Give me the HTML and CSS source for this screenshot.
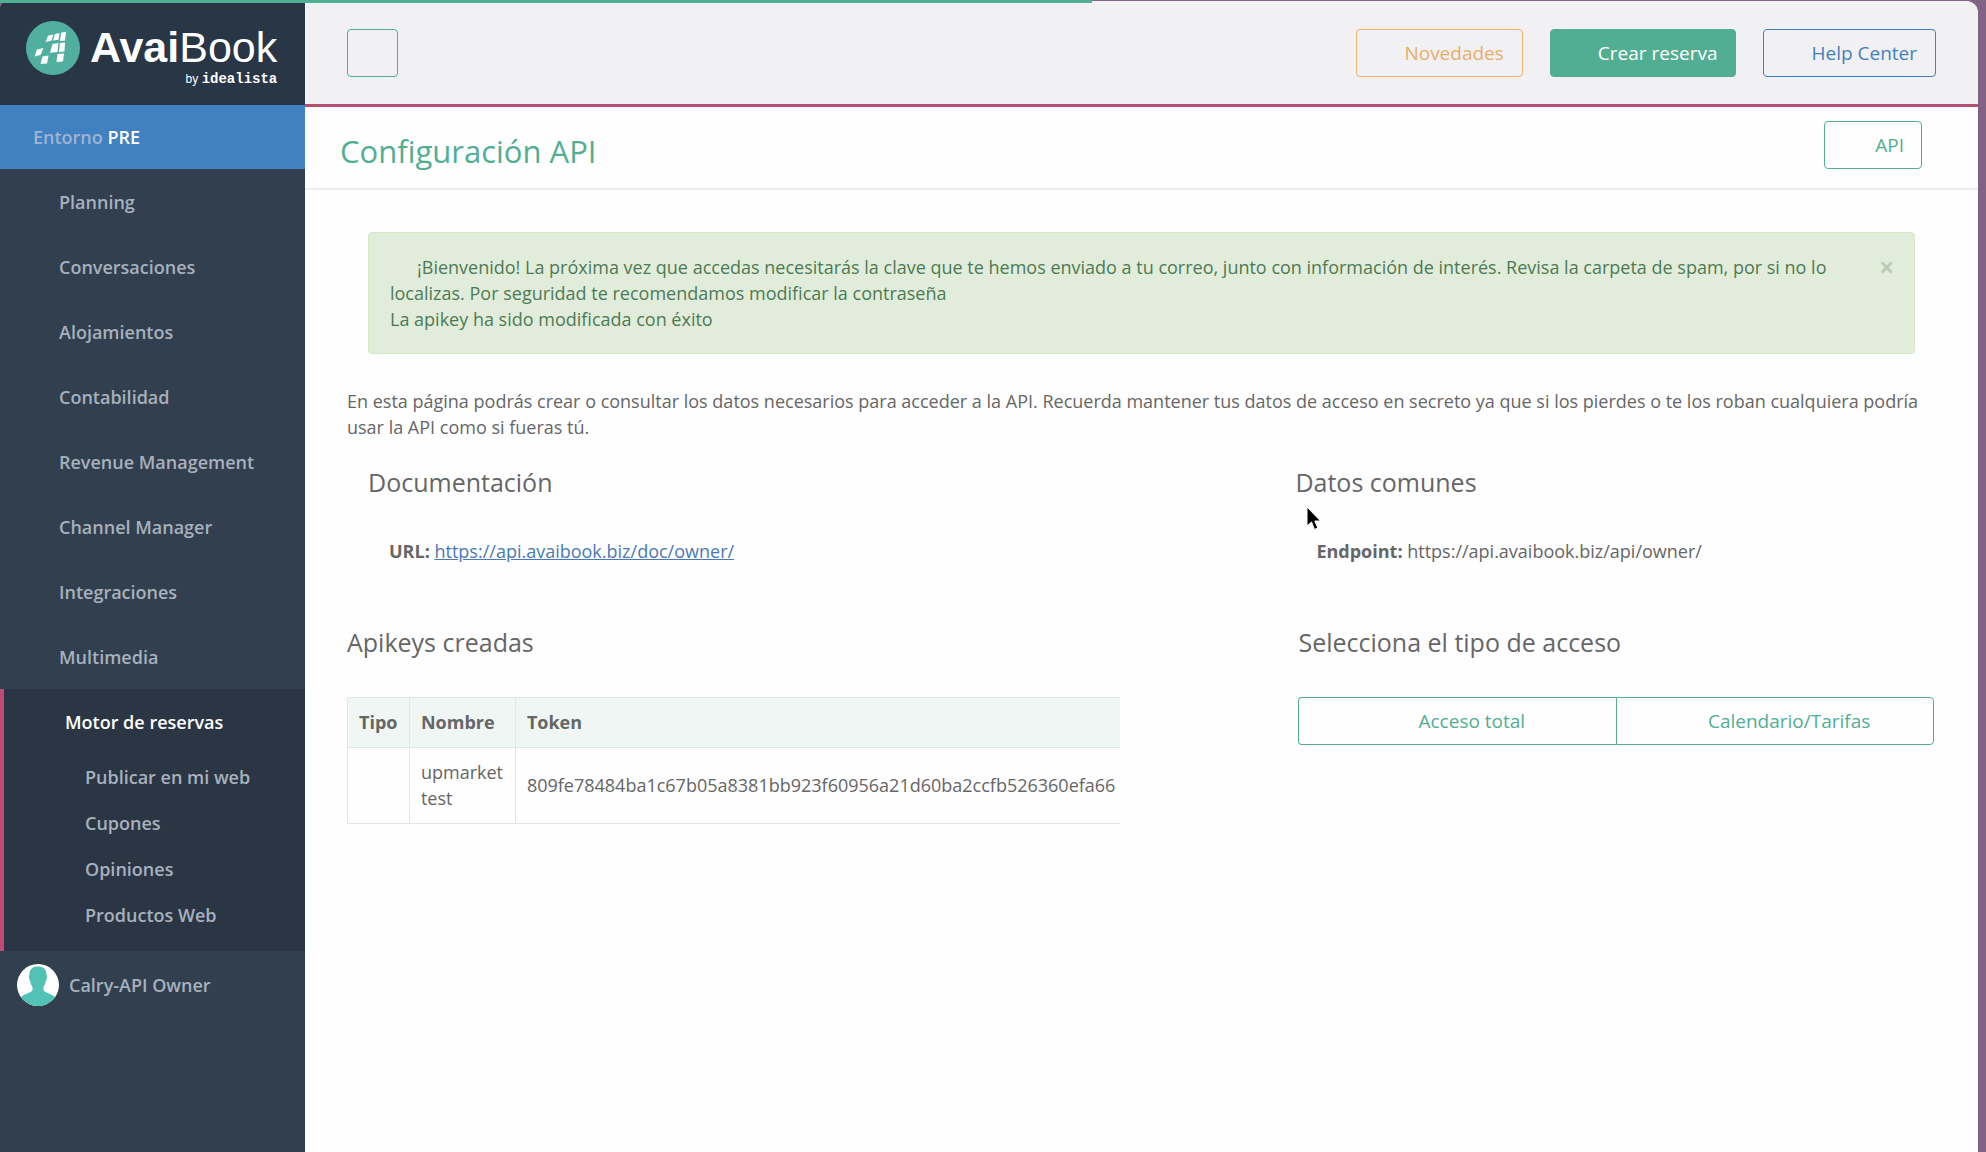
FILE: index.html
```html
<!DOCTYPE html>
<html lang="es">
<head>
<meta charset="utf-8">
<meta name="viewport" content="width=device-width, initial-scale=1">
<title>Configuración API</title>
<link rel="stylesheet" href="styles.css">
</head>
<body>
<div class="progress"></div>
<div class="app">
  <aside class="sidebar">
    <a class="logo" href="#">
      <svg class="logo-mark" viewBox="0 0 54 54" width="54" height="54" aria-hidden="true">
        <circle cx="27" cy="27" r="27" fill="#50af9f"/>
        <g fill="#fff">
          <path d="M22 14.800L27.500 13.500L25.500 19.500L19.500 21Z"/>
          <path d="M29 13L33.500 12L32.500 18.800L27 19.500Z"/>
          <path d="M35 11.800L40 10.800L39 19.500L34 20Z"/>
          <path d="M26.500 23L32.500 22L31.500 31L24 31.800Z"/>
          <path d="M34 22L39 21.500L38.500 30.500L33 31Z"/>
          <path d="M11 28.500L17.500 27L14.500 34L8.500 35.500Z"/>
          <path d="M16.500 35.500L22.500 34.500L21 42.500L14.500 43Z"/>
          <path d="M31.500 33L38 32.500L37 40.500L30.500 41Z"/>
        </g>
      </svg>
      <span class="logo-text">
        <span class="logo-name"><b>Avai</b>Book</span>
        <span class="logo-by">by <b>idealista</b></span>
      </span>
    </a>
    <div class="env">Entorno <b>PRE</b></div>
    <nav>
      <ul class="menu">
        <li><a href="#">Planning</a></li>
        <li><a href="#">Conversaciones</a></li>
        <li><a href="#">Alojamientos</a></li>
        <li><a href="#">Contabilidad</a></li>
        <li><a href="#">Revenue Management</a></li>
        <li><a href="#">Channel Manager</a></li>
        <li><a href="#">Integraciones</a></li>
        <li><a href="#">Multimedia</a></li>
        <li class="active">
          <a href="#">Motor de reservas</a>
          <ul class="submenu">
            <li><a href="#">Publicar en mi web</a></li>
            <li><a href="#">Cupones</a></li>
            <li><a href="#">Opiniones</a></li>
            <li><a href="#">Productos Web</a></li>
          </ul>
        </li>
      </ul>
    </nav>
    <a class="user" href="#">
      <svg viewBox="0 0 42 42" width="42" height="42" aria-hidden="true">
        <clipPath id="disc"><circle cx="21" cy="21" r="21"/></clipPath>
        <g clip-path="url(#disc)">
          <rect width="42" height="42" fill="#fff"/>
          <path fill="#52c1b6" d="M12.500 11C12 5 16 2.500 21 2.500S30 5 29.500 11C30.500 11.500 30 16 28.800 17C28.300 20 27.500 21.500 26.500 23V26C27.500 29 34 29.500 38 33V42H4V33C8 29.500 14.500 29 15.500 26V23C14.500 21.500 13.700 20 13.200 17C12 16 11.500 11.500 12.500 11Z"/>
        </g>
      </svg>
      <span>Calry-API Owner</span>
    </a>
  </aside>

  <main class="main">
    <header class="topbar">
      <button class="btn btn-square" type="button" aria-label="Menú"></button>
      <div class="actions">
        <button class="btn btn-orange" type="button">Novedades</button>
        <button class="btn btn-solid" type="button">Crear reserva</button>
        <button class="btn btn-blue" type="button">Help Center</button>
      </div>
    </header>
    <div class="titlebar">
      <h1>Configuración API</h1>
      <button class="btn" type="button">API</button>
    </div>
    <div class="content">
      <div class="alert" role="status">
        <p><span class="alert-icon"></span>¡Bienvenido! La próxima vez que accedas necesitarás la clave que te hemos enviado a tu correo, junto con información de interés. Revisa la carpeta de spam, por si no lo localizas. Por seguridad te recomendamos modificar la contraseña<br>La apikey ha sido modificada con éxito</p>
        <button class="close" type="button" aria-label="Cerrar">×</button>
      </div>
      <p class="intro">En esta página podrás crear o consultar los datos necesarios para acceder a la API. Recuerda mantener tus datos de acceso en secreto ya que si los pierdes o te los roban cualquiera podría usar la API como si fueras tú.</p>
      <div class="info">
        <section>
          <h2>Documentación</h2>
          <p><b>URL:</b> <a href="#">https://api.avaibook.biz/doc/owner/</a></p>
        </section>
        <section>
          <h2>Datos comunes</h2>
          <svg class="cursor" viewBox="0 0 16 26" width="16" height="26" aria-hidden="true">
            <path d="M1 1V20L5.500 16L8.500 23.500L11.800 22L8.800 15H14.500Z" fill="#000" stroke="#fff" stroke-width="1"/>
          </svg>
          <p><b>Endpoint:</b> https://api.avaibook.biz/api/owner/</p>
        </section>
      </div>
      <div class="keys">
        <section>
          <h2>Apikeys creadas</h2>
          <div class="table-wrap">
            <table>
              <thead><tr><th>Tipo</th><th>Nombre</th><th>Token</th></tr></thead>
              <tbody><tr><td></td><td>upmarket<br>test</td><td>809fe78484ba1c67b05a8381bb923f60956a21d60ba2ccfb526360efa66</td></tr></tbody>
            </table>
          </div>
        </section>
        <section>
          <h2>Selecciona el tipo de acceso</h2>
          <div class="btn-group">
            <button class="btn" type="button">Acceso total</button>
            <button class="btn" type="button">Calendario/Tarifas</button>
          </div>
        </section>
      </div>
    </div>
  </main>
</div>
</body>
</html>
```
FILE: styles.css
```css
* { box-sizing: border-box; }

body {
  margin: 0;
  padding: 1px 8px 0 0;
  background: #826386;
  color: #666;
  font: 18px/26px "Open Sans", sans-serif;
}

h1, h2, p, ul { margin: 0; padding: 0; }
h1, h2 { font-weight: 400; }
ul { list-style: none; }
a { color: inherit; text-decoration: none; }

.progress {
  position: absolute;
  top: 0;
  left: 0;
  width: 55%;
  height: 3px;
  background: #52ae93;
}

.app {
  display: flex;
  min-height: calc(100vh - 1px);
  background: #fefefe;
  border-radius: 8px 12px 0 0;
  overflow: hidden;
}

/* Sidebar */
.sidebar {
  flex: 0 0 305px;
  background: #313f4f;
  color: #a7b1bd;
  font-weight: 600;
}

.logo {
  display: flex;
  gap: 10px;
  height: 104px;
  padding: 20px 26px;
  background: #283646;
  color: #fff;
  font-family: "Liberation Sans", sans-serif;
  font-weight: 400;
}
.logo-mark { flex: none; }
.logo-text { display: flex; flex-direction: column; }
.logo-name { font-size: 43px; line-height: 52px; }
.logo-by { font-size: 12px; line-height: 12px; text-align: right; }
.logo-by b { font: 700 14px/12px "Liberation Mono", monospace; }

.env {
  padding: 19px 33px;
  background: #3f81c1;
  color: #9fb3d3;
}
.env b { color: #fff; font-weight: 600; }

.menu a { display: block; padding: 20px 40px 19px 59px; }
.active {
  border-left: 4px solid #c04a75;
  background: #2b3645;
}
.menu .active > a { padding-left: 61px; color: #fff; }
.submenu { padding-bottom: 13px; }
.menu .submenu a { padding: 10px 0 10px 81px; }

.user {
  display: flex;
  align-items: center;
  gap: 10px;
  padding: 13px 17px;
}

/* Buttons */
.btn {
  height: 48px;
  padding: 0 17px 0 50px;
  border: 1px solid #52ae93;
  border-radius: 4px;
  background: transparent;
  color: #52ae93;
  font: 19px/26px "Open Sans", sans-serif;
}
.btn-square { width: 51px; padding: 0; }
.actions .btn { padding-left: 47px; padding-right: 18px; }
.btn-orange { border-color: #eeb473; color: #eaad69; }
.btn-solid { background: #52ae93; color: #fff; }
.btn-blue { border-color: #4480c0; color: #4480c0; }

/* Header */
.main { flex: 1; min-width: 0; }
.topbar {
  display: flex;
  justify-content: space-between;
  padding: 28px 42px 27px;
  border-bottom: 3px solid #b65270;
  background: #f1f1f3;
}
.actions { display: flex; gap: 27px; }
.titlebar {
  display: flex;
  justify-content: space-between;
  padding: 14px 56px 13px 35px;
  border-bottom: 2px solid #eee;
}
h1 { padding-top: 6px; color: #52ae93; font-size: 31px; line-height: 48px; }

/* Content */
.content { padding: 42px 44px 40px 42px; }
.alert {
  display: flex;
  justify-content: space-between;
  margin: 0 19px 0 21px;
  padding: 21px 20px 21px 21px;
  border: 1px solid #d6e9c6;
  border-radius: 4px;
  background: #e1edda;
  color: #4d7a55;
}
.alert-icon { display: inline-block; width: 27px; }
.close {
  align-self: flex-start;
  padding: 0;
  border: 0;
  background: none;
  color: #bccbb5;
  font: 700 26px/26px "Open Sans", sans-serif;
}
.intro { margin-top: 34px; }

h2 { font-size: 25px; line-height: 36px; }
b { font-weight: 700; }
.info {
  display: grid;
  grid-template-columns: 928fr 639fr;
  padding-left: 21px;
  margin-top: 24px;
}
.info section { position: relative; }
.info p { margin-top: 38px; padding-left: 21px; }
.info a { color: #4a7ab5; text-decoration: underline; }
.cursor { position: absolute; left: 11px; top: 42px; }

.keys {
  display: grid;
  grid-template-columns: 774fr 636fr;
  column-gap: 178px;
  margin-top: 60px;
}
.keys section { min-width: 0; }
.keys h2 { margin-bottom: 37px; }
.table-wrap { overflow: hidden; }
table { min-width: 100%; border-collapse: collapse; white-space: nowrap; }
th, td {
  padding: 11px 11px 12px;
  border: 1px solid #e0e8e5;
  text-align: left;
}
th { background: #eff6f4; font-weight: 700; }
th:last-child, td:last-child { border-right: 0; padding-right: 0; }

.btn-group { display: grid; grid-template-columns: 1fr 1fr; }
.btn-group .btn { padding: 0 0 0 28px; }
.btn-group .btn:first-child { border-right-width: 0; border-radius: 4px 0 0 4px; }
.btn-group .btn:last-child { border-radius: 0 4px 4px 0; }
```
